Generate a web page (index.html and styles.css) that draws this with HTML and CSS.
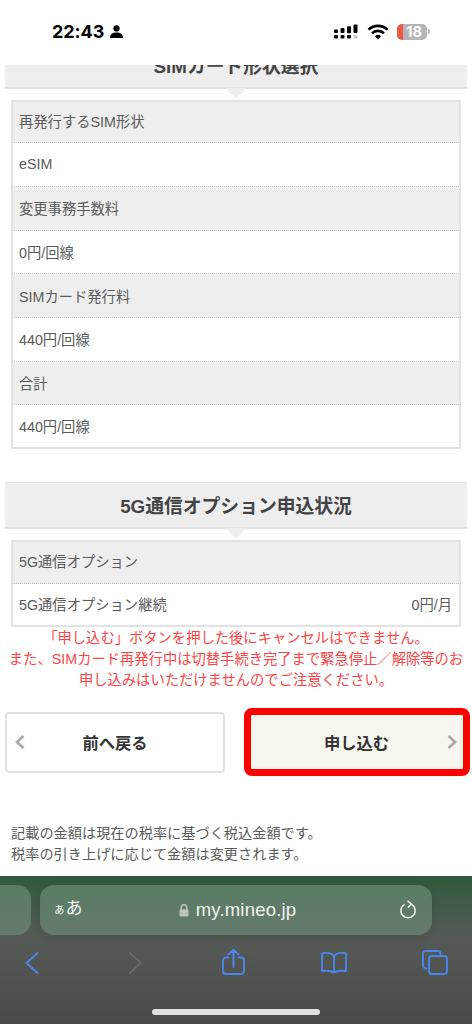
FILE: index.html
```html
<!DOCTYPE html>
<html lang="ja">
<head>
<meta charset="utf-8">
<title>mineo</title>
<link rel="stylesheet" href="styles.css">
</head>
<body>
<div class="phone">
  <header class="status">
    <div class="status-left">
      <span class="clock">22:43</span>
      <svg class="person" viewBox="0 0 12 12" width="13" height="13"><circle cx="6" cy="3.2" r="2.9"/><path d="M0 12c0-3.400 2.400-5 6-5s6 1.600 6 5z"/></svg>
    </div>
    <div class="status-right">
      <svg class="signal" viewBox="0 0 25 16" width="25" height="16">
        <g class="dot-on">
          <rect x="0" y="5.500" width="4" height="3.600" rx="1"/><rect x="0" y="11" width="4" height="3.600" rx="1"/>
          <rect x="6.500" y="4" width="4" height="5" rx="1"/><rect x="6.500" y="11" width="4" height="3.600" rx="1"/>
          <rect x="13" y="2.200" width="4" height="7" rx="1"/><rect x="13" y="11" width="4" height="3.600" rx="1"/>
          <rect x="19.500" y="0.500" width="4" height="8.600" rx="1"/>
        </g>
        <rect class="dot-off" x="19.500" y="11" width="4" height="3.600" rx="1"/>
      </svg>
      <svg class="wifi" viewBox="0 0 22 16" width="22" height="16">
        <path d="M1.500 5.600a14 14 0 0 1 19 0"/><path d="M5 9.200a9 9 0 0 1 12 0"/><path class="wifi-dot" d="M11 15.400l-3-3.200a4.400 4.400 0 0 1 6 0z"/>
      </svg>
      <div class="battery">
        <span class="battery-fill"></span>
        <span class="battery-num">18</span>
      </div>
      <span class="battery-cap"></span>
    </div>
  </header>

  <main class="page">
    <section class="group first">
      <h2 class="band">SIMカード形状選択</h2>
      <div class="table">
        <div class="row head">再発行するSIM形状</div>
        <div class="row">eSIM</div>
        <div class="row head">変更事務手数料</div>
        <div class="row">0円/回線</div>
        <div class="row head">SIMカード発行料</div>
        <div class="row">440円/回線</div>
        <div class="row head">合計</div>
        <div class="row">440円/回線</div>
      </div>
    </section>

    <section class="group second">
      <h2 class="band">5G通信オプション申込状況</h2>
      <div class="table">
        <div class="row head">5G通信オプション</div>
        <div class="row split"><span>5G通信オプション継続</span><span>0円/月</span></div>
      </div>
    </section>

    <p class="warning">「申し込む」ボタンを押した後にキャンセルはできません。<br>また、SIMカード再発行中は切替手続き完了まで緊急停止／解除等のお申し込みはいただけませんのでご注意ください。</p>

    <div class="actions">
      <a class="btn back">
        <svg class="chev" viewBox="0 0 10 14" width="10" height="14"><path d="M8.500 1L2 7l6.500 6"/></svg>
        <span>前へ戻る</span>
      </a>
      <div class="highlight">
        <a class="btn next">
          <span>申し込む</span>
          <svg class="chev" viewBox="0 0 10 14" width="10" height="14"><path d="M1.500 1L8 7l-6.500 6"/></svg>
        </a>
      </div>
    </div>

    <p class="note">記載の金額は現在の税率に基づく税込金額です。<br>税率の引き上げに応じて金額は変更されます。</p>
  </main>

  <footer class="safari">
    <div class="tabs">
      <div class="pill-prev"></div>
      <div class="pill">
        <span class="aa"><small>ぁ</small>あ</span>
        <span class="url">
          <svg class="lock" viewBox="0 0 10 13" width="10" height="13"><path d="M2.200 5.500V3.600a2.800 2.800 0 0 1 5.600 0v1.900" class="lock-arc"/><rect x="0.500" y="5.200" width="9" height="7.300" rx="1.200"/></svg>
          <span>my.mineo.jp</span>
        </span>
        <svg class="reload" viewBox="0 0 18 20" width="18" height="20"><path d="M12.200 4.200a7.200 7.200 0 1 1-6.600.1"/><path d="M8.600 0.800l3.800 3.300-3.400 3.500"/></svg>
      </div>
    </div>
    <nav class="tools">
      <svg class="tool" viewBox="0 0 26 28" width="26" height="28"><path d="M18.500 4L7.500 14l11 10"/></svg>
      <svg class="tool off" viewBox="0 0 26 28" width="26" height="28"><path d="M10 4l11 10-11 10"/></svg>
      <svg class="tool" viewBox="0 0 26 28" width="26" height="28"><path d="M8.500 8.500H6a3 3 0 0 0-3 3V22a3 3 0 0 0 3 3h15a3 3 0 0 0 3-3V11.500a3 3 0 0 0-3-3h-2.500M13.500 18V1M8.500 5.500l5-4.700 5 4.700"/></svg>
      <svg class="tool" viewBox="0 0 26 28" width="26" height="28"><path d="M13 7.500C11.500 4.500 8 3.500 2.500 4 1.500 4.100 1 4.700 1 5.500v16.500c4.500-.6 9-.5 12 1.500 3-2 7.500-2.100 12-1.500V5.500c0-.8-.5-1.400-1.500-1.500C18 3.500 14.500 4.500 13 7.500zM13 7.500v16"/></svg>
      <svg class="tool" viewBox="0 0 26 28" width="26" height="28"><path d="M4.500 19.500H4a3 3 0 0 1-3-3V5a3 3 0 0 1 3-3h11.500a3 3 0 0 1 3 3v.5"/><rect x="7" y="7" width="18" height="18" rx="3"/></svg>
    </nav>
    <div class="home"></div>
  </footer>
</div>
</body>
</html>
```

FILE: styles.css
```css
* { box-sizing: border-box; }
html, body { margin: 0; padding: 0; background: #fff; }
body { font-family: "Liberation Sans", "Noto Sans CJK JP", sans-serif; color: #555; }
.phone { width: 472px; height: 1024px; display: flex; flex-direction: column; overflow: hidden; }

.status { height: 65px; flex: none; display: flex; justify-content: space-between; align-items: flex-start; padding: 21px 42px 0 52px; background: #fff; position: relative; z-index: 2; }
.status-left { display: flex; align-items: center; gap: 6px; }
.clock { font: 700 18px/21px "Inter", "Liberation Sans", sans-serif; color: #000; letter-spacing: -.05px; }
.person { fill: #000; }
.status-right { display: flex; align-items: center; height: 21px; }
.signal { margin-right: 8px; }
.dot-on { fill: #000; }
.dot-off { fill: #c8c8c8; }
.wifi { margin-right: 8px; fill: none; stroke: #000; stroke-width: 2.600; }
.wifi-dot { fill: #000; stroke: none; }
.battery { width: 30px; height: 16px; border-radius: 5px; background: #b5b5b5; position: relative; display: flex; align-items: center; justify-content: center; }
.battery-fill { position: absolute; left: 0; top: 0; bottom: 0; width: 6px; background: #ec5a43; border-radius: 5px 0 0 5px; }
.battery-num { position: relative; font: 700 14.500px/16px "Inter", "Liberation Sans", sans-serif; color: #fff; margin-left: 4px; }
.battery-cap { width: 2px; height: 5px; margin-left: 1px; background: #b5b5b5; border-radius: 0 2px 2px 0; }

.page { flex: 1; min-height: 0; overflow: hidden; background: #fff; padding: 0 5px; }
.group.first { margin-top: -23.500px; }
.group.second { margin-top: 32.900px; }
.band { margin: 0; height: 47px; background: #eee; border-top: 1px solid #e2e2e2; border-bottom: 2px solid #e0e0e0; font-size: 18.800px; font-weight: 700; line-height: 47px; text-align: center; color: #444; position: relative; }
.band::after { content: ""; position: absolute; left: 50%; bottom: -12px; width: 22px; height: 11px; margin-left: -11px; background: #eee; clip-path: polygon(0 0, 100% 0, 50% 100%); }
.table { margin: 11px 6px 0; background: #fff; }
.row { height: 43.700px; padding: 0 7px 1px 6px; display: flex; align-items: center; font-size: 14.300px; color: #5a5a5a; border-left: 2px solid #e2e2e2; border-right: 2px solid #e2e2e2; border-bottom: 1px dotted #c4c4c4; background: #fff; }
.row:first-child { border-top: 2px solid #e2e2e2; padding-bottom: 3px; }
.row:last-child { border-bottom: 2px solid #e2e2e2; }
.row.head { background: #eee; }
.row.split { justify-content: space-between; }

.warning { margin: 0; padding: 1px 2px 0; height: 63px; font-size: 14.300px; line-height: 21px; color: #f44; text-align: center; }
.actions { display: flex; justify-content: space-between; align-items: center; margin-top: 18px; }
.btn { display: flex; align-items: center; font-size: 16.300px; font-weight: 700; color: #333; text-decoration: none; }
.btn span { flex: 1; text-align: center; }
.back { width: 220px; height: 61px; border: 2px solid #e0e0e0; border-radius: 4px; background: #fff; padding: 0 0 0 8px; }
.back span { padding-right: 18px; }
.highlight { width: 226px; height: 67.500px; border: 7px solid #f00; border-radius: 8px; margin-right: -2.500px; background: #f7f6ee; }
.next { height: 100%; padding-right: 6px; }
.next span { padding-left: 16px; }
.chev { flex: none; fill: none; stroke: #aaa; stroke-width: 2.800; }

.note { margin: 47.500px 0 0 6px; font-size: 14.200px; line-height: 21px; color: #5a5a5a; }

.safari { height: 148px; flex: none; position: relative; background: linear-gradient(180deg, #2f5a3b 0%, #3c5b46 14%, #555955 42%, #4a4a4a 100%); }
.tabs { display: flex; gap: 9px; padding-top: 9px; margin-left: -21px; }
.pill-prev { width: 52px; height: 50px; flex: none; border-radius: 14px; background: linear-gradient(180deg, #587d63, #66796c); }
.pill { width: 392px; height: 50px; flex: none; border-radius: 14px; background: linear-gradient(180deg, #587d63, #66796c); display: grid; grid-template-columns: 1fr auto 1fr; align-items: center; padding: 0 15px 0 13px; box-shadow: 0 2px 8px rgba(0,0,0,.1); }
.aa { font-size: 17px; line-height: 22px; color: #f2f2f2; padding-bottom: 2px; }
.aa small { font-size: 12.500px; }
.url { display: flex; align-items: center; gap: 7px; font-size: 18.500px; color: #f2f2f2; letter-spacing: .2px; margin-left: 5px; }
.lock { fill: #b9c2bc; }
.lock-arc { fill: none; stroke: #b9c2bc; stroke-width: 1.500; }
.reload { justify-self: end; fill: none; stroke: #f2f2f2; stroke-width: 1.500; }
.tools { display: flex; align-items: center; justify-content: space-between; padding: 0 24.500px 0 19px; margin-top: 14px; }
.tool { fill: none; stroke: #4a86ec; stroke-width: 1.900; stroke-linecap: round; stroke-linejoin: round; }
.tool.off { stroke: #696969; }
.home { position: absolute; left: 152px; bottom: 9px; width: 168px; height: 6px; border-radius: 3px; background: #e0e0e0; }
```
